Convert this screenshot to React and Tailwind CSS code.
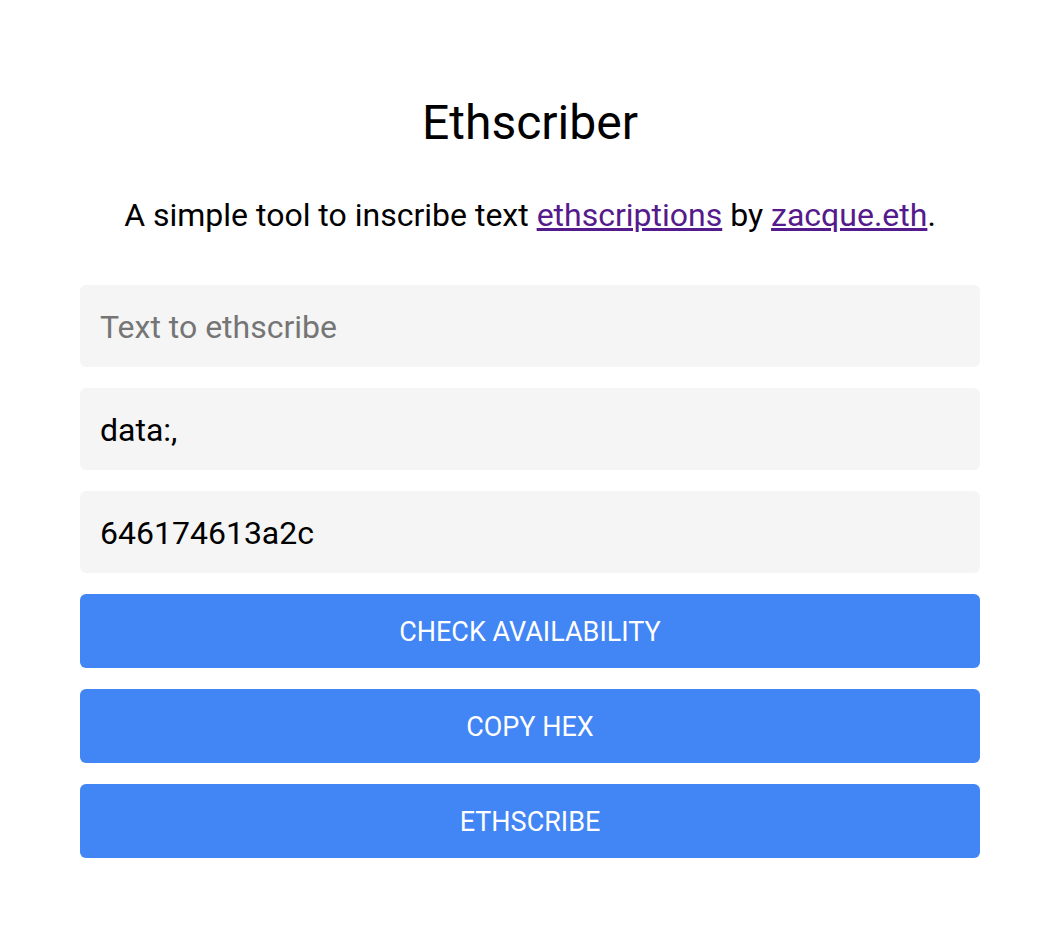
import React, { useState } from 'react';

const toHex = (str) =>
  Array.from(new TextEncoder().encode(str))
    .map((b) => b.toString(16).padStart(2, '0'))
    .join('');

export default function App() {
  const [text, setText] = useState('');
  const dataUri = `data:,${text}`;
  const hex = toHex(dataUri);

  return (
    <div className="min-h-screen bg-white font-['Roboto',sans-serif] text-black">
      <div className="ml-[80px] w-[900px] pt-[94px]">
        <h1 className="text-center text-[48px] leading-[58px]">Ethscriber</h1>
        <p className="mt-[44px] text-center text-[32px] leading-[38px]">
          A simple tool to inscribe text{' '}
          <a href="#" className="text-[#551a8b] underline">ethscriptions</a> by{' '}
          <a href="#" className="text-[#551a8b] underline">zacque.eth</a>.
        </p>
        <div className="mt-[51px] flex flex-col gap-[21px]">
          <input
            value={text}
            onChange={(e) => setText(e.target.value)}
            placeholder="Text to ethscribe"
            className="h-[82px] rounded-md bg-[#f5f5f5] px-5 pt-[2px] text-[32px] outline-none placeholder:text-[#757575]"
          />
          <input
            readOnly
            value={dataUri}
            className="h-[82px] rounded-md bg-[#f5f5f5] px-5 pt-[2px] text-[32px] outline-none"
          />
          <input
            readOnly
            value={hex}
            className="h-[82px] rounded-md bg-[#f5f5f5] px-5 pt-[2px] text-[32px] outline-none"
          />
          <button className="h-[74px] rounded-md bg-[#4285f4] pt-[3px] text-[27px] uppercase text-white">
            Check Availability
          </button>
          <button className="h-[74px] rounded-md bg-[#4285f4] pt-[3px] text-[27px] uppercase text-white">
            Copy Hex
          </button>
          <button className="h-[74px] rounded-md bg-[#4285f4] pt-[3px] text-[27px] uppercase text-white">
            Ethscribe
          </button>
        </div>
      </div>
    </div>
  );
}
